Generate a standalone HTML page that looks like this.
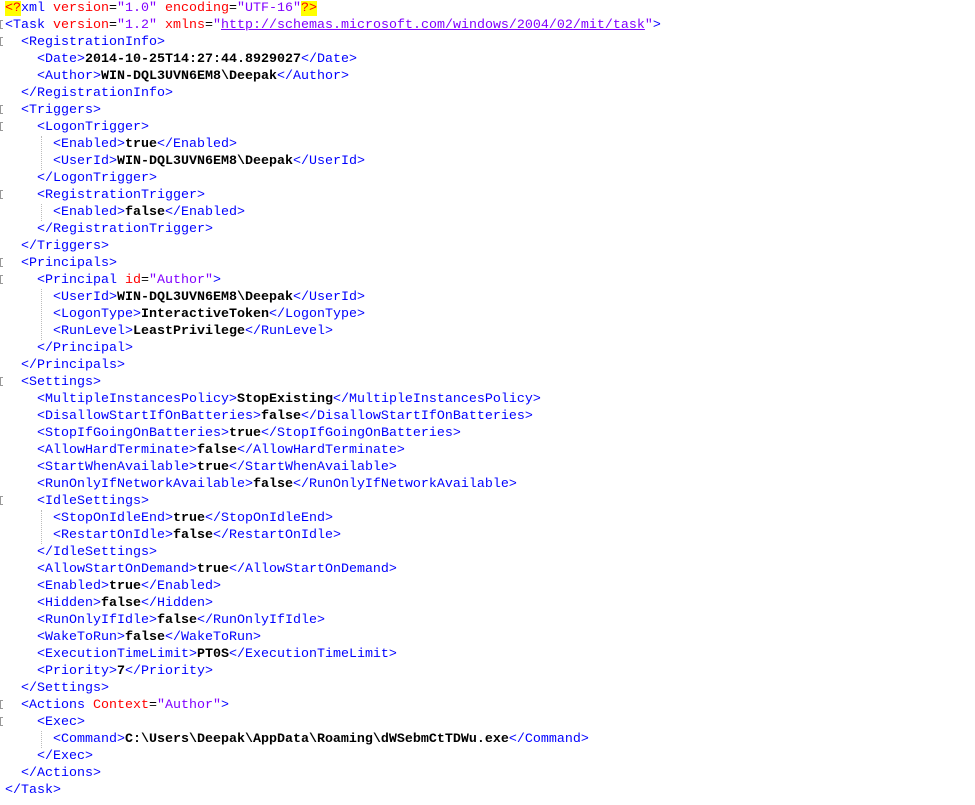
<!DOCTYPE html>
<html><head><meta charset="utf-8"><style>
html,body{margin:0;padding:0;background:#fff;width:975px;height:805px;overflow:hidden}
#c{position:absolute;left:5px;top:0px;font-family:"Liberation Mono","Courier New",monospace;font-size:13.33px;line-height:17px;white-space:pre;color:#000}
.t{color:#0000ff}.a{color:#ff0000}.v{color:#8000ff}.b{font-weight:bold;color:#000}
.y{background:#ffff00;color:#ff0000}.u{color:#8000ff;text-decoration:underline}
.f{position:absolute;left:0;width:3px;height:9px;border:1px solid #999;border-right:none;box-sizing:border-box}
.g{position:absolute;left:41px;width:0;height:17px;border-left:1px dotted #bbb}
</style></head><body>
<div id="c"><span class="y">&lt;?</span><span class="t">xml</span> <span class="a">version</span>=<span class="v">"1.0"</span> <span class="a">encoding</span>=<span class="v">"UTF-16"</span><span class="y">?&gt;</span>
<span class="t">&lt;Task</span> <span class="a">version</span>=<span class="v">"1.2"</span> <span class="a">xmlns</span>=<span class="v">"</span><span class="u">http://schemas.microsoft.com/windows/2004/02/mit/task</span><span class="v">"</span><span class="t">&gt;</span>
  <span class="t">&lt;RegistrationInfo&gt;</span>
    <span class="t">&lt;Date&gt;</span><span class="b">2014-10-25T14:27:44.8929027</span><span class="t">&lt;/Date&gt;</span>
    <span class="t">&lt;Author&gt;</span><span class="b">WIN-DQL3UVN6EM8\Deepak</span><span class="t">&lt;/Author&gt;</span>
  <span class="t">&lt;/RegistrationInfo&gt;</span>
  <span class="t">&lt;Triggers&gt;</span>
    <span class="t">&lt;LogonTrigger&gt;</span>
      <span class="t">&lt;Enabled&gt;</span><span class="b">true</span><span class="t">&lt;/Enabled&gt;</span>
      <span class="t">&lt;UserId&gt;</span><span class="b">WIN-DQL3UVN6EM8\Deepak</span><span class="t">&lt;/UserId&gt;</span>
    <span class="t">&lt;/LogonTrigger&gt;</span>
    <span class="t">&lt;RegistrationTrigger&gt;</span>
      <span class="t">&lt;Enabled&gt;</span><span class="b">false</span><span class="t">&lt;/Enabled&gt;</span>
    <span class="t">&lt;/RegistrationTrigger&gt;</span>
  <span class="t">&lt;/Triggers&gt;</span>
  <span class="t">&lt;Principals&gt;</span>
    <span class="t">&lt;Principal</span> <span class="a">id</span>=<span class="v">"Author"</span><span class="t">&gt;</span>
      <span class="t">&lt;UserId&gt;</span><span class="b">WIN-DQL3UVN6EM8\Deepak</span><span class="t">&lt;/UserId&gt;</span>
      <span class="t">&lt;LogonType&gt;</span><span class="b">InteractiveToken</span><span class="t">&lt;/LogonType&gt;</span>
      <span class="t">&lt;RunLevel&gt;</span><span class="b">LeastPrivilege</span><span class="t">&lt;/RunLevel&gt;</span>
    <span class="t">&lt;/Principal&gt;</span>
  <span class="t">&lt;/Principals&gt;</span>
  <span class="t">&lt;Settings&gt;</span>
    <span class="t">&lt;MultipleInstancesPolicy&gt;</span><span class="b">StopExisting</span><span class="t">&lt;/MultipleInstancesPolicy&gt;</span>
    <span class="t">&lt;DisallowStartIfOnBatteries&gt;</span><span class="b">false</span><span class="t">&lt;/DisallowStartIfOnBatteries&gt;</span>
    <span class="t">&lt;StopIfGoingOnBatteries&gt;</span><span class="b">true</span><span class="t">&lt;/StopIfGoingOnBatteries&gt;</span>
    <span class="t">&lt;AllowHardTerminate&gt;</span><span class="b">false</span><span class="t">&lt;/AllowHardTerminate&gt;</span>
    <span class="t">&lt;StartWhenAvailable&gt;</span><span class="b">true</span><span class="t">&lt;/StartWhenAvailable&gt;</span>
    <span class="t">&lt;RunOnlyIfNetworkAvailable&gt;</span><span class="b">false</span><span class="t">&lt;/RunOnlyIfNetworkAvailable&gt;</span>
    <span class="t">&lt;IdleSettings&gt;</span>
      <span class="t">&lt;StopOnIdleEnd&gt;</span><span class="b">true</span><span class="t">&lt;/StopOnIdleEnd&gt;</span>
      <span class="t">&lt;RestartOnIdle&gt;</span><span class="b">false</span><span class="t">&lt;/RestartOnIdle&gt;</span>
    <span class="t">&lt;/IdleSettings&gt;</span>
    <span class="t">&lt;AllowStartOnDemand&gt;</span><span class="b">true</span><span class="t">&lt;/AllowStartOnDemand&gt;</span>
    <span class="t">&lt;Enabled&gt;</span><span class="b">true</span><span class="t">&lt;/Enabled&gt;</span>
    <span class="t">&lt;Hidden&gt;</span><span class="b">false</span><span class="t">&lt;/Hidden&gt;</span>
    <span class="t">&lt;RunOnlyIfIdle&gt;</span><span class="b">false</span><span class="t">&lt;/RunOnlyIfIdle&gt;</span>
    <span class="t">&lt;WakeToRun&gt;</span><span class="b">false</span><span class="t">&lt;/WakeToRun&gt;</span>
    <span class="t">&lt;ExecutionTimeLimit&gt;</span><span class="b">PT0S</span><span class="t">&lt;/ExecutionTimeLimit&gt;</span>
    <span class="t">&lt;Priority&gt;</span><span class="b">7</span><span class="t">&lt;/Priority&gt;</span>
  <span class="t">&lt;/Settings&gt;</span>
  <span class="t">&lt;Actions</span> <span class="a">Context</span>=<span class="v">"Author"</span><span class="t">&gt;</span>
    <span class="t">&lt;Exec&gt;</span>
      <span class="t">&lt;Command&gt;</span><span class="b">C:\Users\Deepak\AppData\Roaming\dWSebmCtTDWu.exe</span><span class="t">&lt;/Command&gt;</span>
    <span class="t">&lt;/Exec&gt;</span>
  <span class="t">&lt;/Actions&gt;</span>
<span class="t">&lt;/Task&gt;</span></div>
<div class="f" style="top:20px"></div>
<div class="f" style="top:37px"></div>
<div class="f" style="top:105px"></div>
<div class="f" style="top:122px"></div>
<div class="f" style="top:190px"></div>
<div class="f" style="top:258px"></div>
<div class="f" style="top:275px"></div>
<div class="f" style="top:377px"></div>
<div class="f" style="top:496px"></div>
<div class="f" style="top:700px"></div>
<div class="f" style="top:717px"></div>
<div class="g" style="top:136px;height:34px"></div>
<div class="g" style="top:204px;height:17px"></div>
<div class="g" style="top:289px;height:51px"></div>
<div class="g" style="top:510px;height:34px"></div>
<div class="g" style="top:731px;height:17px"></div>
</body></html>
